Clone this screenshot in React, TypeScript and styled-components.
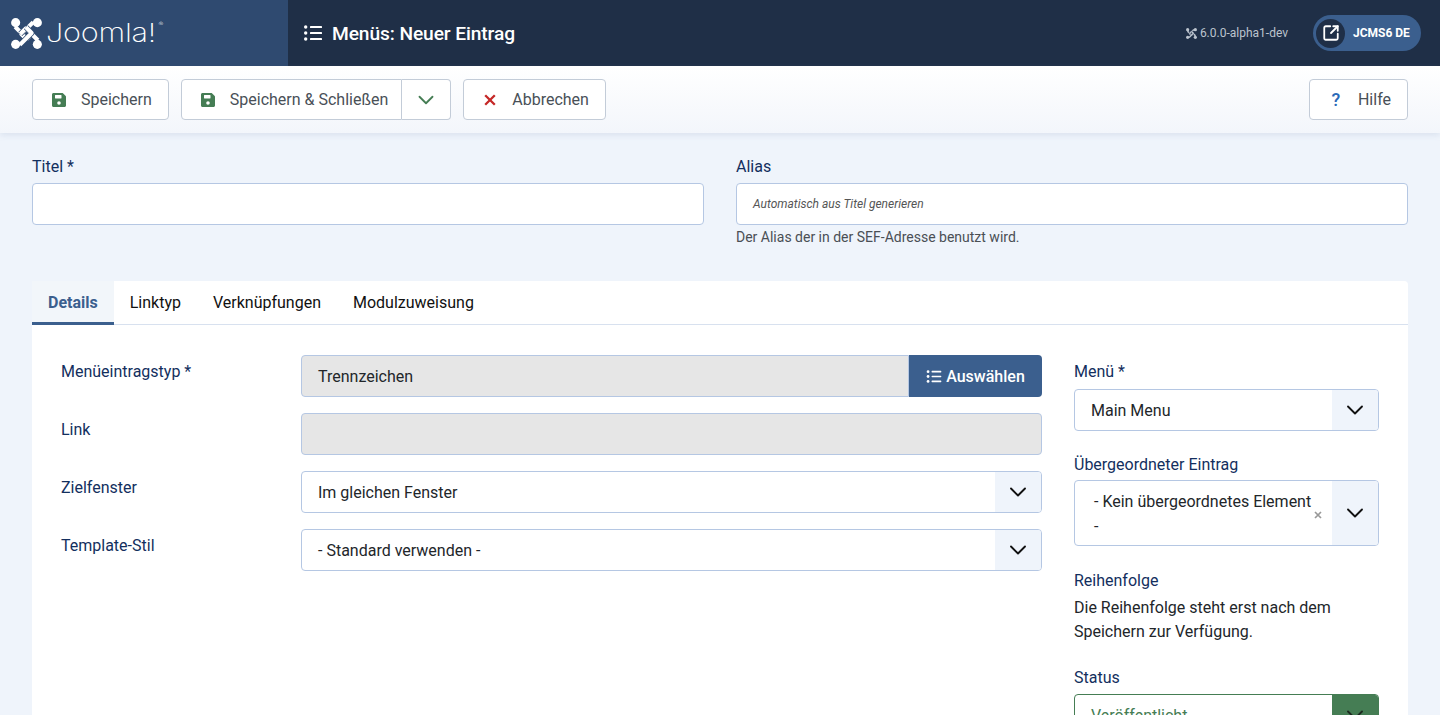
import React from 'react'
import styled, { createGlobalStyle } from 'styled-components'
import { ChevronDown, SquareArrowOutUpRight } from 'lucide-react'

const colors = {
  page: '#eff4fb',
  navy: '#1f2f47',
  brand: '#2f4a70',
  blue: '#3b5f8e',
  label: '#132f5e',
  text: '#22262a',
  grey: '#495057',
  border: '#b5c7e3',
  btnBorder: '#c3ccd8',
  green: '#457d54',
  red: '#c52827',
  disabled: '#e6e6e6',
}

const GlobalStyle = createGlobalStyle`
  html, body {
    margin: 0;
    height: 100%;
    overflow: hidden;
    background: ${colors.page};
    font-family: Roboto, "Liberation Sans", sans-serif;
    font-size: 16px;
    color: ${colors.text};
  }
  * { box-sizing: border-box; }
`

const Header = styled.header`
  display: flex;
  align-items: stretch;
  height: 66px;
  background: ${colors.navy};
  color: #fff;
`

const Brand = styled.div`
  display: flex;
  align-items: center;
  gap: 4px;
  width: 288px;
  padding-left: 11px;
  background: ${colors.brand};
`

const Wordmark = styled.span`
  position: relative;
  display: inline-block;
  font-family: Inter, sans-serif;
  font-weight: 200;
  font-size: 26px;
  line-height: 1;
  letter-spacing: -0.2px;
  color: #fff;
  transform: scaleX(1.18);
  transform-origin: left center;

  sup {
    position: absolute;
    top: 1px;
    right: -6px;
    font-size: 6px;
    letter-spacing: 0;
  }
`

const PageTitle = styled.h1`
  display: flex;
  align-items: center;
  gap: 10px;
  flex: 1;
  margin: 0;
  padding-left: 16px;
  font-size: 19.2px;
  font-weight: 500;
  letter-spacing: -0.1px;
`

const Version = styled.span`
  display: flex;
  align-items: center;
  gap: 3px;
  align-self: center;
  margin-right: 25px;
  font-size: 12px;
  color: #bcc4ce;
`

const SitePill = styled.div`
  display: flex;
  align-items: center;
  align-self: center;
  gap: 8px;
  width: 108px;
  height: 36px;
  margin-right: 19px;
  padding-left: 3px;
  border-radius: 18px;
  background: ${colors.blue};
  font-size: 12px;
  font-weight: 700;
`

const SiteIcon = styled.span`
  display: flex;
  align-items: center;
  justify-content: center;
  width: 29px;
  height: 29px;
  border-radius: 50%;
  background: ${colors.navy};
`

const Toolbar = styled.div`
  display: flex;
  align-items: center;
  gap: 12px;
  height: 67px;
  padding: 0 32px;
  background: linear-gradient(#ffffff, #f3f6fb);
  box-shadow: 0 2px 6px rgba(120, 145, 185, 0.18);
`

const ToolButton = styled.button`
  display: inline-flex;
  align-items: center;
  height: 41px;
  padding: 0 16px 0 19px;
  gap: 15px;
  border: 1px solid ${colors.btnBorder};
  border-radius: 4px;
  background: #fff;
  font-family: inherit;
  font-size: 16px;
  color: ${colors.grey};
`

const ButtonGroup = styled.div`
  display: flex;

  ${ToolButton}:first-child {
    padding-right: 13px;
    border-radius: 4px 0 0 4px;
  }
`

const CaretButton = styled(ToolButton)`
  width: 49px;
  padding: 0;
  justify-content: center;
  border-left: 0;
  border-radius: 0 4px 4px 0;
`

const HelpMark = styled.span`
  width: 14px;
  text-align: center;
  font-size: 18px;
  font-weight: 500;
  color: #2a69b8;
`

const Spacer = styled.div`
  flex: 1;
`

const Main = styled.main`
  padding: 22px 32px 0;
`

const TitleGrid = styled.div`
  display: grid;
  grid-template-columns: 672px 672px;
  gap: 32px;
  height: 126px;
`

const Field = styled.div`
  display: flex;
  flex-direction: column;
  align-items: stretch;
`

const Label = styled.label`
  display: block;
  height: 24px;
  font-size: 16px;
  line-height: 24px;
  color: ${colors.label};
`

const TopLabel = styled(Label)`
  margin-bottom: 4px;
`

const Input = styled.div<{ $disabled?: boolean; $joined?: boolean }>`
  display: flex;
  align-items: center;
  flex: ${p => (p.$joined ? 1 : 'none')};
  height: 42px;
  padding: 0 16px;
  border: 1px solid ${colors.border};
  border-radius: ${p => (p.$joined ? '4px 0 0 4px' : '4px')};
  background: ${p => (p.$disabled ? colors.disabled : '#fff')};
  font-size: 16px;
  color: ${colors.text};
`

const Placeholder = styled.span`
  font-size: 12px;
  font-style: italic;
  color: #555;
`

const Hint = styled.div`
  margin-top: 2px;
  font-size: 14px;
  line-height: 20px;
  color: #4a4f55;
`

const Card = styled.section`
  height: 500px;
  border-radius: 4px 4px 0 0;
  background: #fff;
`

const Tabs = styled.nav`
  display: flex;
  height: 44px;
  border-bottom: 1px solid #d8e1ef;
`

const Tab = styled.div<{ $active?: boolean }>`
  display: flex;
  align-items: center;
  height: 44px;
  padding: 1px 16px 0;
  border-bottom: 3px solid ${p => (p.$active ? colors.blue : 'transparent')};
  background: ${p => (p.$active ? '#f2f6fa' : 'transparent')};
  font-size: 16px;
  font-weight: ${p => (p.$active ? 700 : 400)};
  color: ${p => (p.$active ? colors.blue : '#111')};
`

const CardBody = styled.div`
  display: grid;
  grid-template-columns: 981px 305px;
  gap: 32px;
  padding: 30px 29px 0;
`

const FormColumn = styled.div`
  display: flex;
  flex-direction: column;
  gap: 16px;
`

const FormRow = styled.div`
  display: grid;
  grid-template-columns: 240px 741px;
  min-height: 42px;

  ${Label} {
    padding-top: 5px;
    height: auto;
  }
`

const InputGroup = styled.div`
  display: flex;
`

const SelectButton = styled.button`
  display: flex;
  align-items: center;
  justify-content: center;
  gap: 4px;
  width: 133px;
  height: 42px;
  border: 0;
  border-radius: 0 4px 4px 0;
  background: ${colors.blue};
  font-family: inherit;
  font-size: 16px;
  font-weight: 500;
  color: #fff;
`

const Select = styled.div<{ $tall?: boolean; $status?: boolean }>`
  display: flex;
  align-items: stretch;
  height: ${p => (p.$tall ? '66px' : '42px')};
  border: 1px solid ${p => (p.$status ? colors.green : colors.border)};
  border-radius: 4px;
  background: #fff;
  overflow: hidden;
  font-size: 16px;
  color: ${p => (p.$status ? colors.green : colors.text)};
`

const SelectValue = styled.div`
  display: flex;
  align-items: center;
  flex: 1;
  padding-left: 16px;
`

const TallValue = styled.div`
  position: relative;
  flex: 1;
  padding: 8px 18px 0 19px;
  line-height: 25px;
`

const ClearMark = styled.span`
  position: absolute;
  right: 10px;
  top: 30px;
  display: flex;
`

const SelectCaret = styled.div<{ $status?: boolean }>`
  display: flex;
  align-items: center;
  justify-content: center;
  width: 46px;
  background: ${p => (p.$status ? colors.green : colors.page)};
  color: ${p => (p.$status ? '#1c2a20' : '#111')};
`

const SideColumn = styled.aside`
  display: flex;
  flex-direction: column;
  padding-top: 5px;
`

const SideField = styled.div<{ $gap: number; $labelGap: number }>`
  margin-bottom: ${p => p.$gap}px;

  ${Label} {
    margin-bottom: ${p => p.$labelGap}px;
  }
`

const OrderingNote = styled.p`
  margin: 0;
  font-size: 16px;
  line-height: 24px;
  color: ${colors.text};
`

// Floppy disk as Joomla's toolbar draws it: solid shape with cut-outs
const SaveIcon = () => (
  <svg width="14" height="14" viewBox="0 0 14 14" fill={colors.green}>
    <path
      fillRule="evenodd"
      d="M1.5 0h8.6c.4 0 .8.2 1.1.4l2.3 2.3c.3.3.5.7.5 1.1v8.7c0 .8-.7 1.5-1.500 1.500h-11C.7 14 0 13.300 0 12.500v-11C0 .7.7 0 1.500 0zM3 2.500v2.600c0 .2.200.4.4.4h5.700c.2 0 .4-.2.4-.4V2.500c0-.2-.2-.4-.4-.4H3.400c-.2 0-.4.2-.4.4zM7 8.200a1.800 1.800 0 1 0 0 3.600 1.800 1.800 0 0 0 0-3.600z"
    />
  </svg>
)

const CloseIcon = () => (
  <svg width="14" height="14" viewBox="0 0 14 14" fill="none" stroke={colors.red} strokeWidth="2.300">
    <path d="M2.200 2.200 L11.800 11.800 M11.800 2.200 L2.200 11.800" />
  </svg>
)

const ClearIcon = () => (
  <svg width="8" height="8" viewBox="0 0 8 8" fill="none" stroke="#999" strokeWidth="1.700">
    <path d="M1 1 L7 7 M7 1 L1 7" />
  </svg>
)

// Font Awesome style list: three dots and three bars
const ListIcon = ({ width, height }: { width: number; height: number }) => (
  <svg width={width} height={height} viewBox="0 0 18 16" fill="currentColor">
    <circle cx="1.700" cy="2" r="1.700" />
    <circle cx="1.700" cy="8" r="1.700" />
    <circle cx="1.700" cy="14" r="1.700" />
    <rect x="6" y="1" width="12" height="2" rx="0.600" />
    <rect x="6" y="7" width="12" height="2" rx="0.600" />
    <rect x="6" y="13" width="12" height="2" rx="0.600" />
  </svg>
)

const hooks = [0, 90, 180, 270]

// Four interlaced arms forming a turned square, each over a wider stroke in the background colour
const JoomlaMark = ({ size, color, back }: { size: number; color: string; back: string }) => (
  <svg width={size} height={size} viewBox="0 0 30 30" fill="none" strokeLinejoin="round">
    {hooks.map(angle => (
      <g key={angle} transform={`rotate(${angle} 15 15)`}>
        <path d="M4 8.500 L15.500 20 L21 14.500" stroke={back} strokeWidth="5.400" />
        <path d="M4 8.500 L15.500 20 L21 14.500" stroke={color} strokeWidth="4" />
        <circle cx="4.500" cy="4.500" r="4.400" fill={color} />
      </g>
    ))}
  </svg>
)

const Caret = ({ status }: { status?: boolean }) => (
  <SelectCaret $status={status}>
    <ChevronDown size={28} strokeWidth={1.600} />
  </SelectCaret>
)

export default function App() {
  return (
    <>
      <GlobalStyle />
      <Header>
        <Brand>
          <JoomlaMark size={31} color="#fff" back={colors.brand} />
          <Wordmark>
            Joomla!<sup>®</sup>
          </Wordmark>
        </Brand>
        <PageTitle>
          <ListIcon width={18} height={16} />
          Menüs: Neuer Eintrag
        </PageTitle>
        <Version>
          <JoomlaMark size={11} color="#bcc4ce" back={colors.navy} />
          6.0.0-alpha1-dev
        </Version>
        <SitePill>
          <SiteIcon>
            <SquareArrowOutUpRight size={18} strokeWidth={2.400} />
          </SiteIcon>
          JCMS6 DE
        </SitePill>
      </Header>

      <Toolbar>
        <ToolButton>
          <SaveIcon />
          Speichern
        </ToolButton>
        <ButtonGroup>
          <ToolButton>
            <SaveIcon />
            Speichern &amp; Schließen
          </ToolButton>
          <CaretButton aria-label="Mehr">
            <ChevronDown size={26} strokeWidth={1.700} color={colors.green} />
          </CaretButton>
        </ButtonGroup>
        <ToolButton>
          <CloseIcon />
          Abbrechen
        </ToolButton>
        <Spacer />
        <ToolButton>
          <HelpMark>?</HelpMark>
          Hilfe
        </ToolButton>
      </Toolbar>

      <Main>
        <TitleGrid>
          <Field>
            <TopLabel>Titel *</TopLabel>
            <Input />
          </Field>
          <Field>
            <TopLabel>Alias</TopLabel>
            <Input>
              <Placeholder>Automatisch aus Titel generieren</Placeholder>
            </Input>
            <Hint>Der Alias der in der SEF-Adresse benutzt wird.</Hint>
          </Field>
        </TitleGrid>

        <Card>
          <Tabs>
            <Tab $active>Details</Tab>
            <Tab>Linktyp</Tab>
            <Tab>Verknüpfungen</Tab>
            <Tab>Modulzuweisung</Tab>
          </Tabs>
          <CardBody>
            <FormColumn>
              <FormRow>
                <Label>Menüeintragstyp *</Label>
                <InputGroup>
                  <Input $disabled $joined>
                    Trennzeichen
                  </Input>
                  <SelectButton>
                    <ListIcon width={16} height={13} />
                    Auswählen
                  </SelectButton>
                </InputGroup>
              </FormRow>
              <FormRow>
                <Label>Link</Label>
                <Input $disabled />
              </FormRow>
              <FormRow>
                <Label>Zielfenster</Label>
                <Select>
                  <SelectValue>Im gleichen Fenster</SelectValue>
                  <Caret />
                </Select>
              </FormRow>
              <FormRow>
                <Label>Template-Stil</Label>
                <Select>
                  <SelectValue>- Standard verwenden -</SelectValue>
                  <Caret />
                </Select>
              </FormRow>
            </FormColumn>

            <SideColumn>
              <SideField $gap={22} $labelGap={5}>
                <Label>Menü *</Label>
                <Select>
                  <SelectValue>Main Menu</SelectValue>
                  <Caret />
                </Select>
              </SideField>
              <SideField $gap={23} $labelGap={3}>
                <Label>Übergeordneter Eintrag</Label>
                <Select $tall>
                  <TallValue>
                    - Kein übergeordnetes Element -
                    <ClearMark>
                      <ClearIcon />
                    </ClearMark>
                  </TallValue>
                  <Caret />
                </Select>
              </SideField>
              <SideField $gap={22} $labelGap={3}>
                <Label>Reihenfolge</Label>
                <OrderingNote>
                  Die Reihenfolge steht erst nach dem Speichern zur Verfügung.
                </OrderingNote>
              </SideField>
              <SideField $gap={0} $labelGap={4}>
                <Label>Status</Label>
                <Select $status>
                  <SelectValue>Veröffentlicht</SelectValue>
                  <Caret status />
                </Select>
              </SideField>
            </SideColumn>
          </CardBody>
        </Card>
      </Main>
    </>
  )
}
